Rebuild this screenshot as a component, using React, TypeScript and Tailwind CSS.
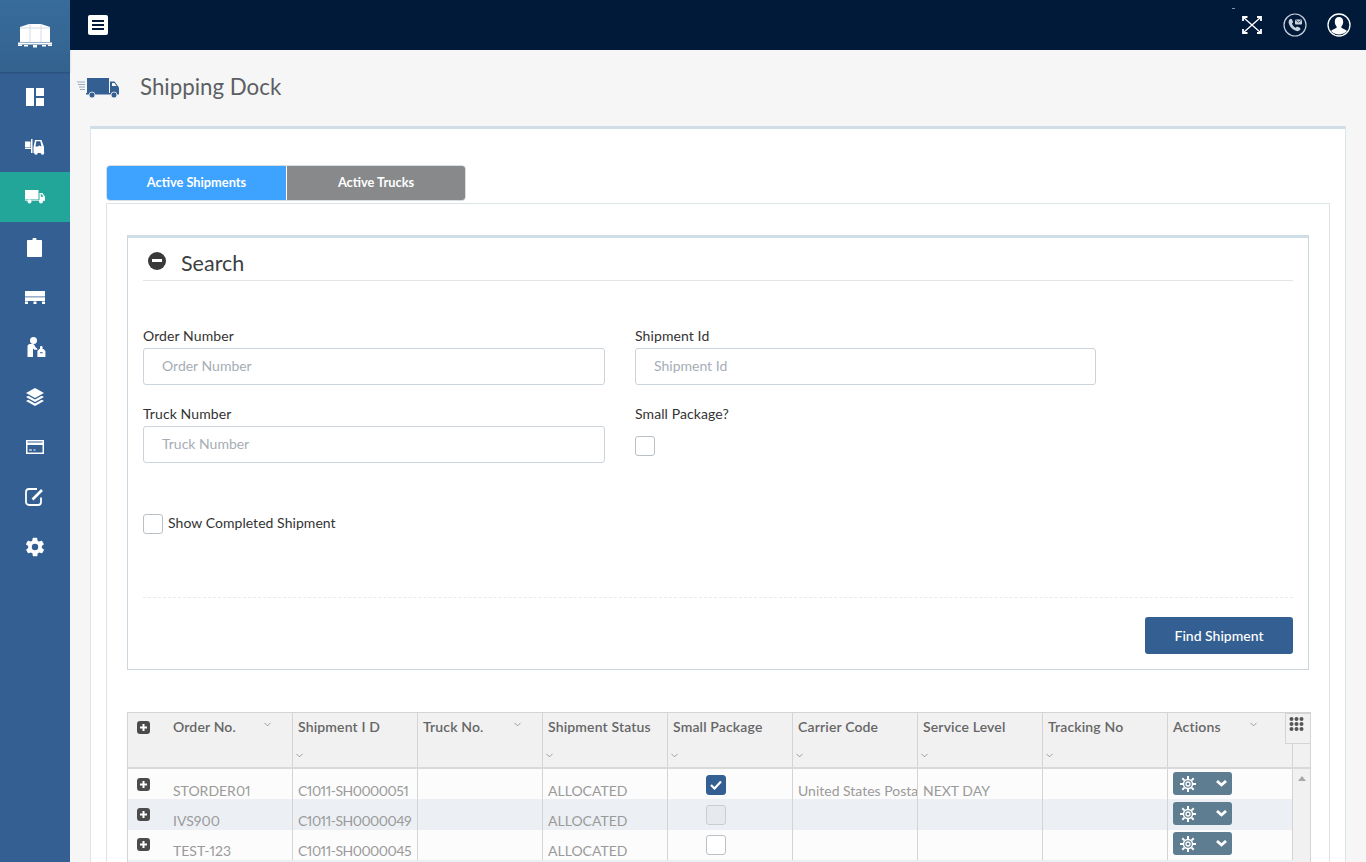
import React from 'react';
import { ChevronDown } from 'lucide-react';

const IconProps = { fill: 'white', xmlns: 'http://www.w3.org/2000/svg' };

const DashboardIcon = () => (
  <svg width="20" height="18" viewBox="0 0 20 18" {...IconProps}>
    <rect x="1" y="0" width="8" height="18" />
    <rect x="11" y="0" width="8" height="8" />
    <rect x="11" y="10" width="8" height="8" />
  </svg>
);

const ForkliftIcon = () => (
  <svg width="20" height="16" viewBox="0 0 20 16" {...IconProps}>
    <rect x="0" y="2.500" width="5.500" height="6" />
    <rect x="0" y="9" width="7" height="1" />
    <rect x="6" y="0" width="1.500" height="14" />
    <path fillRule="evenodd" d="M10 1h6.500L19 8v6H8.500V8zM11.300 2.300L10.500 7.500H13l1-1 2.500 1-1.200-5.200z" />
    <circle cx="11" cy="14" r="1.800" />
    <circle cx="17.500" cy="14" r="1.800" />
  </svg>
);

const TruckIcon = () => (
  <svg width="20" height="14" viewBox="0 0 20 14" fill="white">
    <rect x="0" y="0" width="13.500" height="9.500" />
    <path fillRule="evenodd" d="M14.500 3h3L20 6.500V10.500h-5.500zM15.800 4.200v2.600h2.600l-1.500-2.600z" />
    <rect x="0" y="10" width="20" height=".8" opacity=".8" />
    <circle cx="4.500" cy="11.500" r="2" />
    <circle cx="16" cy="11.500" r="2" />
  </svg>
);

const ClipboardIcon = () => (
  <svg width="15" height="19" viewBox="0 0 15 19" {...IconProps}>
    <path d="M1 2h4.500V1.200C5.500.5 6 0 6.500 0h2c.5 0 1 .5 1 1.200V2H14c.6 0 1 .4 1 1v15c0 .6-.4 1-1 1H1c-.6 0-1-.4-1-1V3c0-.6.4-1 1-1z" />
  </svg>
);

const PalletIcon = () => (
  <svg width="20" height="13" viewBox="0 0 20 13" {...IconProps}>
    <rect x="0" y="0" width="20" height="5.500" />
    <rect x="0" y="6.300" width="20" height="3.700" />
    <rect x="0" y="10.500" width="3" height="2.500" />
    <rect x="8.500" y="10.500" width="3" height="2.500" />
    <rect x="17" y="10.500" width="3" height="2.500" />
  </svg>
);

const WorkerIcon = () => (
  <svg width="20" height="20" viewBox="0 0 20 20" className="overflow-visible" {...IconProps}>
    <g transform="translate(1.500 0)">
      <circle cx="7" cy="3.500" r="3.500" />
      <path d="M1 9.500C1 8 2 7 3.500 7h2.500c1 0 1.500.5 2 1.300L9.500 11h1.200v1.800H8L6.500 11.500V20H1z" />
      <path fillRule="evenodd" d="M12.700 12h.8v-1.700c0-.8.6-1.300 1.300-1.300s1.300.5 1.300 1.300V12h.8l2 2V20h-8v-6zM13.500 15.200v1h2.800v-1z" />
    </g>
  </svg>
);

const LayersIcon = () => (
  <svg width="18" height="18" viewBox="0 0 18 18" {...IconProps}>
    <path d="M9 0l9 5-9 5-9-5z" />
    <path d="M2.300 7.700L9 11.400l6.700-3.700L18 9l-9 5-9-5z" />
    <path d="M2.300 11.700L9 15.400l6.700-3.700L18 13l-9 5-9-5z" />
  </svg>
);

const CardIcon = () => (
  <svg width="18" height="14" viewBox="0 0 18 14" fill="none" stroke="white">
    <rect x=".75" y=".75" width="16.500" height="12.500" strokeWidth="1.500" />
    <rect x="1" y="2.500" width="16" height="2.500" fill="white" stroke="none" />
    <path d="M3 10h3M7.500 10h2" strokeWidth="1.200" />
  </svg>
);

const EditIcon = () => (
  <svg width="19" height="18" viewBox="0 0 19 18" fill="none" stroke="white" strokeWidth="1.800">
    <path d="M16 9.500v4.500a3 3 0 0 1-3 3H4a3 3 0 0 1-3-3V4a3 3 0 0 1 3-3h8" />
    <path d="M7.500 11.500L17 2" strokeWidth="2.600" />
  </svg>
);

const GearIcon = ({ size = 18, fill = 'white' }: { size?: number; fill?: string }) => (
  <svg width={size} height={size} viewBox="0 0 24 24" fill={fill}>
    <path fillRule="evenodd" d="M19.400 13c.1-.3.100-.7.100-1s0-.7-.1-1l2.100-1.600c.2-.2.200-.4.100-.6l-2-3.500c-.1-.2-.4-.3-.6-.2l-2.500 1c-.5-.4-1.100-.7-1.700-1l-.4-2.600c0-.3-.2-.5-.5-.5h-4c-.2 0-.4.200-.5.500l-.4 2.600c-.6.300-1.200.6-1.700 1l-2.500-1c-.2-.1-.5 0-.6.200l-2 3.500c-.1.200-.1.400.1.600L4.600 11c0 .3-.1.700-.1 1s0 .7.100 1l-2.100 1.600c-.2.200-.2.400-.1.600l2 3.500c.1.200.4.300.6.200l2.500-1c.5.400 1.100.7 1.700 1l.4 2.600c0 .3.200.5.500.5h4c.2 0 .5-.2.500-.5l.4-2.600c.6-.3 1.200-.6 1.700-1l2.500 1c.2.100.5 0 .6-.2l2-3.500c.1-.2.100-.4-.1-.6zM12 15.500a3.500 3.500 0 1 1 0-7 3.500 3.500 0 0 1 0 7z" />
  </svg>
);

const LogoIcon = () => (
  <svg width="34" height="25" viewBox="0 0 34 25" fill="white">
    <path d="M2 3L11 0h12l9 3v15H2z" />
    <path d="M2 4h30M12 0v18M23 0v18" stroke="#c4d3e0" strokeWidth=".8" />
    <path d="M0 18.500h34v2H0z" />
    <path d="M0 20.500h4v1.500H0zM6 21h4v1.500H6zM15 21h4v2.500h-4zM24 21h4v1.500h-4zM30 20.500h4v1.500h-4z" />
  </svg>
);

const PlusBox = () => (
  <svg width="13" height="13" viewBox="0 0 13 13">
    <rect width="13" height="13" rx="3" fill="#4b4b4b" />
    <path d="M6.500 3v7M3 6.500h7" stroke="white" strokeWidth="2" />
  </svg>
);

const ActionButton = () => (
  <div className="flex h-[23px] w-[59px] items-center justify-between rounded-[3px] bg-[#5f7d90] pl-[7px] pr-[5px]">
    <svg width="16" height="16" viewBox="0 0 16 16" fill="none" stroke="white">
      <circle cx="8" cy="8" r="4.500" strokeWidth="1.400" />
      <circle cx="8" cy="8" r="2" strokeWidth="1.300" />
      <path d="M8 0v3M8 13v3M0 8h3M13 8h3M2.300 2.300l2.100 2.100M11.600 11.600l2.100 2.100M2.300 13.700l2.100-2.100M11.600 4.400l2.100-2.100" strokeWidth="2" />
    </svg>
    <svg width="11" height="7" viewBox="0 0 11 7" fill="none" stroke="white" strokeWidth="2.800">
      <path d="M1 1l4.500 4L10 1" />
    </svg>
  </div>
);

const navItems = [
  { icon: <DashboardIcon /> },
  { icon: <ForkliftIcon /> },
  { icon: <TruckIcon />, active: true },
  { icon: <ClipboardIcon /> },
  { icon: <PalletIcon /> },
  { icon: <WorkerIcon /> },
  { icon: <LayersIcon /> },
  { icon: <CardIcon /> },
  { icon: <EditIcon /> },
  { icon: <GearIcon size={22} /> },
];

const columns = [
  { label: 'Order No.', chevron: 'absolute right-[19px] top-[6px] text-[#777]' },
  { label: 'Shipment I D' },
  { label: 'Truck No.', chevron: 'absolute right-[19px] top-[6px] text-[#777]' },
  { label: 'Shipment Status' },
  { label: 'Small Package' },
  { label: 'Carrier Code' },
  { label: 'Service Level' },
  { label: 'Tracking No' },
  { label: 'Actions', chevron: 'absolute right-[33px] top-[6px] text-[#777]' },
];

const rows = [
  { order: 'STORDER01', shipment: 'C1011-SH0000051', status: 'ALLOCATED', small: true, carrier: 'United States Postal Service', service: 'NEXT DAY', h: 'h-[30px]', bg: 'bg-[#fcfcfc]', plusPad: 'pt-[9px]', textPad: 'pt-[13px]', checkPad: 'pt-[6px]', btnPad: 'pt-[3px]' },
  { order: 'IVS900', shipment: 'C1011-SH0000049', status: 'ALLOCATED', disabled: true, carrier: '', service: '', h: 'h-[31px]', bg: 'bg-[#ecf0f4]', plusPad: 'pt-[9px]', textPad: 'pt-[13px]', checkPad: 'pt-[6px]', btnPad: 'pt-[3px]' },
  { order: 'TEST-123', shipment: 'C1011-SH0000045', status: 'ALLOCATED', carrier: '', service: '', h: 'h-[30px]', bg: 'bg-[#fcfcfc]', plusPad: 'pt-[8px]', textPad: 'pt-[12px]', checkPad: 'pt-[5px]', btnPad: 'pt-[2px]' },
];

const Field = ({ label }: { label: string }) => (
  <div className="flex flex-col">
    <label className="mb-[3px] h-[18px] text-[14px] leading-[18px] tracking-[0.1px] text-[#333]">{label}</label>
    <input
      placeholder={label}
      className="h-[37px] rounded-[3px] border border-[#ccd3da] bg-white px-[18px] pb-[2px] text-[14px] outline-none placeholder:text-[#a6adb5]"
    />
  </div>
);

const Cell = ({ children, className = '' }: { children?: React.ReactNode; className?: string }) => (
  <div className={`w-[125px] shrink-0 overflow-hidden whitespace-nowrap border-r border-[#d4d4d4] pl-[5px] text-[14px] leading-[18px] text-[#9a9a9a] ${className}`}>
    {children}
  </div>
);

export default function App() {
  return (
    <div className="flex h-[862px] w-[1366px] overflow-hidden bg-[#f6f6f6] font-['Lato','Open_Sans',sans-serif] proportional-nums">
      <aside className="flex w-[70px] shrink-0 flex-col bg-[#335f92]">
        <div className="flex h-[72px] items-center justify-center bg-gradient-to-b from-[#386c9b] to-[#34628f] shadow-[0_1px_2px_rgba(0,0,0,0.2)]">
          <LogoIcon />
        </div>
        {navItems.map((item, i) => (
          <div
            key={i}
            className={`flex h-[50px] items-center justify-center pr-[1px] ${item.active ? 'bg-[#22a699]' : ''}`}
          >
            {item.icon}
          </div>
        ))}
      </aside>

      <main className="flex min-w-0 flex-1 flex-col">
        <header className="relative flex h-[50px] shrink-0 items-center justify-between bg-[#021a3a] pl-[18px] pr-[15px]">
          <button className="flex h-[20px] w-[20px] flex-col items-center justify-center gap-[2px] rounded-[2px] bg-white">
            <span className="h-[2px] w-[12px] bg-[#021a3a]" />
            <span className="h-[2px] w-[12px] bg-[#021a3a]" />
            <span className="h-[2px] w-[12px] bg-[#021a3a]" />
          </button>
          <span className="absolute left-[1162px] top-[8px] h-[1px] w-[3px] bg-[#8593a5]" />
          <div className="flex items-center gap-[20px]">
            <svg width="20" height="18" viewBox="0 0 20 18" fill="none" stroke="white" strokeWidth="1.300" className="mr-[1px]">
              <path d="M1.500 1.500l17 15M18.500 1.500l-17 15" />
              <path d="M1 5V1h4.500M15 1h4v4M1 13v4h4.500M15 17h4v-4" strokeWidth="1.800" />
            </svg>
            <svg width="24" height="24" viewBox="0 0 24 24" fill="none">
              <circle cx="12" cy="12" r="11" stroke="#c8d2dc" strokeWidth="1.200" />
              <path d="M6.500 6.500c1-1 2-1 2.500 0l1 2.200c.2.500 0 1-.5 1.400l-.6.500c.6 1.800 2 3.300 3.800 4.200l.7-.7c.4-.4.900-.5 1.400-.3l2 1c.8.400.8 1.500.1 2.300-1 1.100-2.500 1.400-4 .7C9 16.200 6.800 13.500 5.800 10.500c-.4-1.500 0-3 .7-4z" fill="#c8d2dc" />
              <rect x="12" y="6.500" width="7" height="5" rx=".8" fill="#c8d2dc" />
              <path d="M12.500 7l3 2.200L18.500 7" stroke="#021a3a" strokeWidth=".7" />
            </svg>
            <svg width="24" height="24" viewBox="0 0 24 24">
              <circle cx="12" cy="12" r="11" fill="#021a3a" stroke="white" strokeWidth="1.300" />
              <path d="M12 4c2.600 0 4.200 2 4.200 4.800 0 1.900-.8 3.600-1.800 4.600v1.300c.6.800 4.300 1.600 5.600 3.300a11 11 0 0 1-16 0c1.300-1.700 5-2.500 5.600-3.300v-1.300C8.600 12.400 7.800 10.700 7.800 8.800 7.800 6 9.400 4 12 4z" fill="white" />
            </svg>
          </div>
        </header>

        <div className="flex h-[76px] shrink-0 items-center pb-[2px] pl-[7px]">
          <svg width="43" height="22" viewBox="0 0 43 22" className="mt-[4px]">
            <path d="M0 4h8M1 6.500h7M2 9h6M3 11.500h5" stroke="#7d95b0" strokeWidth=".8" />
            <rect x="10" y="0" width="22" height="15" fill="#335f92" />
            <path d="M33 3.500h4.500l4.500 6v6h-9z" fill="#335f92" />
            <rect x="9" y="15" width="33" height="1.500" fill="#335f92" />
            <circle cx="15" cy="17" r="3" fill="#335f92" stroke="#f6f6f6" strokeWidth=".8" />
            <circle cx="37" cy="17" r="3" fill="#335f92" stroke="#f6f6f6" strokeWidth=".8" />
            <path d="M35 5h2.500l2 3H35z" fill="#f6f6f6" />
          </svg>
          <h1 className="ml-[20px] text-[22.3px] leading-none text-[#5c5f63]">Shipping Dock</h1>
        </div>

        <section className="mx-[20px] flex min-h-0 flex-1 flex-col overflow-hidden border-x border-t-[3px] border-[#cfdde6] border-x-[#dbe4ea] bg-white px-[15px] pt-[36px]">
          <div className="flex h-[36px] w-[360px] shrink-0 overflow-hidden rounded-[4px] border border-[#d8dde0] text-[12.8px] font-bold text-white">
            <div className="flex w-[179px] items-center justify-center bg-[#3ea2ff]">Active Shipments</div>
            <div className="flex flex-1 items-center justify-center border-l border-white bg-[#87898b]">Active Trucks</div>
          </div>

          <div className="mt-[2px] flex-1 border border-[#dde4e8] px-[20px] pt-[31px]">
            <div className="flex h-[435px] flex-col border-x border-b border-t-[3px] border-[#cbd6dc] border-t-[#cfdde6] px-[15px]">
              <div className="flex h-[43px] shrink-0 items-center gap-[15px] border-b border-[#e1e5e8] pl-[5px]">
                <span className="mt-[3px] flex h-[18px] w-[18px] items-center justify-center rounded-full bg-[#3a3a3a]">
                  <span className="h-[3px] w-[10px] bg-white" />
                </span>
                <h2 className="pt-[10px] text-[21.5px] leading-none text-[#3d4043]">Search</h2>
              </div>

              <div className="mt-[46px] grid grid-cols-[462px_461px] gap-x-[30px] gap-y-[20px]">
                <Field label="Order Number" />
                <Field label="Shipment Id" />
                <Field label="Truck Number" />
                <div className="flex flex-col">
                  <label className="mb-[3px] h-[18px] text-[14px] leading-[18px] tracking-[0.1px] text-[#333]">Small Package?</label>
                  <span className="mt-[10px] h-[20px] w-[20px] rounded-[3px] border border-[#b9c1c7] bg-white" />
                </div>
              </div>

              <label className="mt-[51px] flex items-center gap-[5px] text-[14px] leading-[20px] tracking-[0.05px] text-[#333]">
                <span className="h-[20px] w-[20px] rounded-[3px] border border-[#b9c1c7] bg-white" />
                <span className="-mt-[2px]">Show Completed Shipment</span>
              </label>

              <div className="mt-[63px] border-t border-dashed border-[#e8ebed]" />

              <div className="mt-[19px] flex justify-end">
                <button className="h-[37px] w-[148px] rounded-[3px] bg-[#335f92] pb-[1px] text-[14px] font-medium text-white">
                  Find Shipment
                </button>
              </div>
            </div>

            <div className="mt-[42px] w-[1184px] border-x border-t border-[#d4d4d4]">
              <div className="flex h-[56px] border-b-2 border-[#d9d9d9] bg-[#f1f1f1]">
                <div className="w-[40px] shrink-0 pl-[9px] pt-[8px]">
                  <PlusBox />
                </div>
                {columns.map(col => (
                  <div key={col.label} className="relative w-[125px] shrink-0 border-r border-[#d4d4d4] pl-[5px] pt-[5px] text-[14px] font-semibold leading-[18px] tracking-[0.15px] text-[#666]">
                    {col.label}
                    <ChevronDown
                      size={11}
                      strokeWidth={1.500}
                      className={col.chevron ?? 'absolute bottom-[6px] left-[1px] text-[#777]'}
                    />
                  </div>
                ))}
                <div className="relative flex-1">
                  <div className="absolute -left-[8px] top-0 flex h-[31px] w-[26px] items-start justify-start border border-[#d4d4d4] bg-[#f1f1f1] pl-[3px] pt-[3px]">
                    <svg width="15" height="14" viewBox="0 0 15 14" fill="#555">
                      {[2, 7, 12].flatMap(y => [2, 7, 12].map(x => <circle key={`${x}-${y}`} cx={x + 0.5} cy={y} r="2" />))}
                    </svg>
                  </div>
                </div>
              </div>

              <div className="flex">
                <div className="flex flex-col">
                  {rows.map((row, i) => (
                    <div key={i} className={`flex ${row.h} ${row.bg}`}>
                      <div className={`w-[40px] shrink-0 pl-[9px] ${row.plusPad}`}>
                        <PlusBox />
                      </div>
                      <Cell className={row.textPad}>{row.order}</Cell>
                      <Cell className={`tracking-[-0.5px] ${row.textPad}`}>{row.shipment}</Cell>
                      <Cell />
                      <Cell className={row.textPad}>{row.status}</Cell>
                      <Cell className={`pl-[38px] ${row.checkPad}`}>
                        <span className={`flex h-[20px] w-[20px] items-center justify-center rounded-[3px] border ${row.small ? 'border-[#335f92] bg-[#335f92]' : row.disabled ? 'border-[#c9ced2] bg-[#e6eaee]' : 'border-[#b9c1c7] bg-white'}`}>
                          {row.small && (
                            <svg width="12" height="10" viewBox="0 0 12 10" fill="none" stroke="white" strokeWidth="2.200">
                              <path d="M1 5l3.500 3.500L11 1.500" />
                            </svg>
                          )}
                        </span>
                      </Cell>
                      <Cell className={row.textPad}>{row.carrier}</Cell>
                      <Cell className={row.textPad}>{row.service}</Cell>
                      <Cell />
                      <Cell className={row.btnPad}>
                        <ActionButton />
                      </Cell>
                    </div>
                  ))}
                  <div className="h-[10px] bg-[#ecf0f4]" />
                </div>
                <div className="flex flex-1 justify-center bg-[#f1f1f1] pt-[7px]">
                  <span className="h-0 w-0 border-x-[4px] border-b-[5px] border-x-transparent border-b-[#a9a9a9]" />
                </div>
              </div>
            </div>
          </div>
        </section>
      </main>
    </div>
  );
}
